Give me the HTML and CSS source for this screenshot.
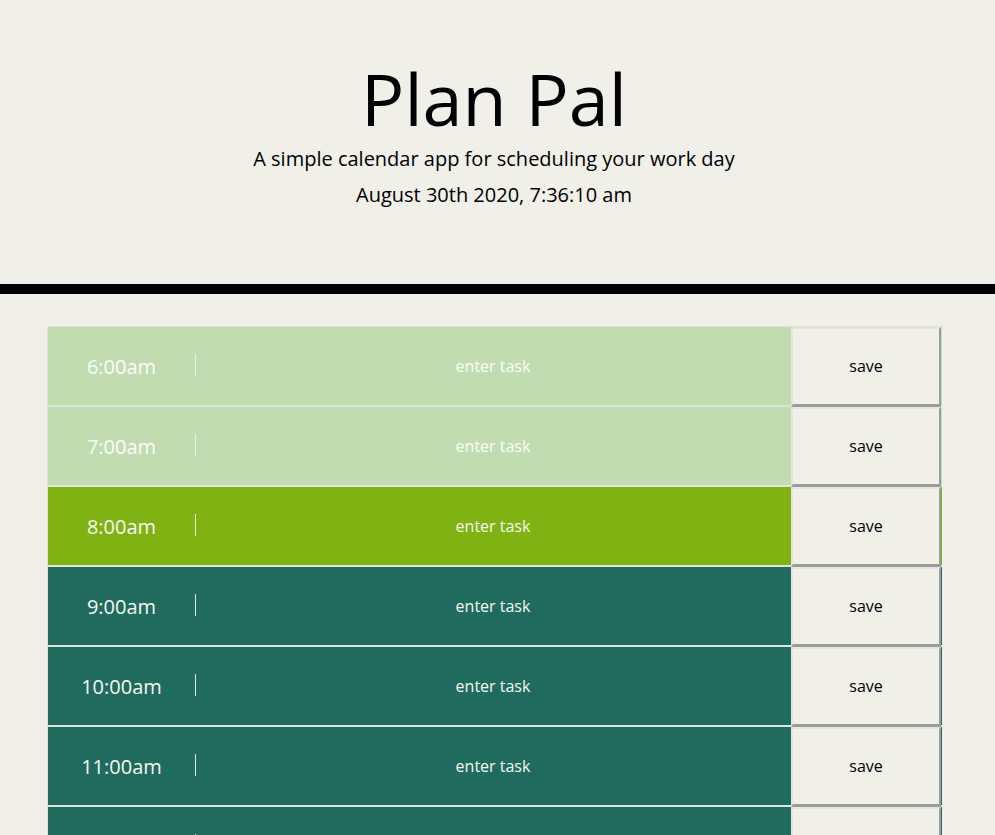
FILE: index.html
```html
<!DOCTYPE html>
<html lang="en">
<head>
<meta charset="utf-8">
<title>Plan Pal</title>
<link rel="stylesheet" href="styles.css">
</head>
<body>
<header class="jumbo">
  <h1 class="title">Plan Pal</h1>
  <p class="lead">A simple calendar app for scheduling your work day</p>
  <p class="lead date">August 30th 2020, 7:36:10 am</p>
</header>
<main class="planner">
  <div class="row past">
    <div class="hour">6:00am</div>
    <div class="task"><span class="caret"></span><span class="ph">enter task</span></div>
    <button class="save">save</button>
  </div>
  <div class="row past">
    <div class="hour">7:00am</div>
    <div class="task"><span class="caret"></span><span class="ph">enter task</span></div>
    <button class="save">save</button>
  </div>
  <div class="row present">
    <div class="hour">8:00am</div>
    <div class="task"><span class="caret"></span><span class="ph">enter task</span></div>
    <button class="save">save</button>
  </div>
  <div class="row future">
    <div class="hour">9:00am</div>
    <div class="task"><span class="caret"></span><span class="ph">enter task</span></div>
    <button class="save">save</button>
  </div>
  <div class="row future">
    <div class="hour">10:00am</div>
    <div class="task"><span class="caret"></span><span class="ph">enter task</span></div>
    <button class="save">save</button>
  </div>
  <div class="row future">
    <div class="hour">11:00am</div>
    <div class="task"><span class="caret"></span><span class="ph">enter task</span></div>
    <button class="save">save</button>
  </div>
  <div class="row future">
    <div class="hour">12:00pm</div>
    <div class="task"><span class="caret"></span><span class="ph">enter task</span></div>
    <button class="save">save</button>
  </div>
  <div class="row future">
    <div class="hour">1:00pm</div>
    <div class="task"><span class="caret"></span><span class="ph">enter task</span></div>
    <button class="save">save</button>
  </div>
</main>
</body>
</html>
```
FILE: styles.css
```css
html, body {
  margin: 0;
  padding: 0;
  background: #f0efe8;
  font-family: "Open Sans", "DejaVu Sans", sans-serif;
  color: #000;
}

.jumbo {
  text-align: center;
  padding: 52px 7px 0 0;
  height: 232px;
  border-bottom: 10px solid #000;
  box-sizing: content-box;
}

.title {
  margin: 0;
  font-size: 72px;
  font-weight: 400;
  line-height: 92px;
}

.lead {
  margin: 0;
  font-size: 20px;
  line-height: 30px;
  font-weight: 400;
}

.lead.date {
  margin-top: 6px;
}

.planner {
  margin: 32px 0 0 47px;
  width: 894px;
  border-left: 1px solid #e2e2de;
  border-top: 1px solid #e2e2de;
}

.row {
  display: grid;
  grid-template-columns: 147px 596px 150px;
  height: 80px;
  border-bottom: 2px solid #dfe5dc;
  box-sizing: border-box;
}

.past { background: #c1dcb0; }
.present { background: #80b214; }
.future { background: #206b5e; }

.hour {
  display: flex;
  align-items: center;
  justify-content: center;
  color: #f6f8f2;
  font-size: 20px;
}

.task {
  position: relative;
  display: flex;
  align-items: center;
  justify-content: center;
  color: #f6f8f2;
  font-size: 16px;
}

.past .hour,
.past .task { color: #fbfcf8; }

.caret {
  position: absolute;
  left: 0;
  top: 27px;
  height: 22px;
  border-left: 1px solid rgba(255, 255, 255, 0.85);
}

.past .caret {
  border-left-color: rgba(255, 255, 255, 0.6);
}

.save {
  background: #f0efe8;
  font-family: "Open Sans", "DejaVu Sans", sans-serif;
  font-size: 16px;
  color: #000;
  border-top: 2px solid #e3e3e0;
  border-left: 2px solid #e3e3e0;
  border-right: 2px solid #9c9c9c;
  border-bottom: 3px solid #9c9c9c;
  margin: 0 0 -2px 0;
  padding: 0 0 2px;
  height: 80px;
}
```
